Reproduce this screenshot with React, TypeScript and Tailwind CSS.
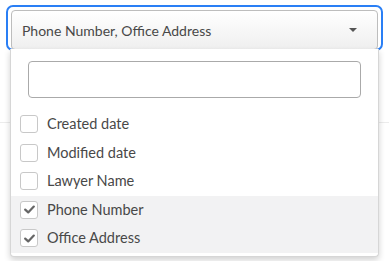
import { useState } from 'react'

const OPTIONS = ['Created date', 'Modified date', 'Lawyer Name', 'Phone Number', 'Office Address']

function Check() {
  return (
    <svg width="11" height="9" viewBox="0 0 11 9" className="text-[#666]">
      <path d="M1.2 4.6 L4.2 7.4 L9.8 1.6" fill="none" stroke="currentColor" strokeWidth="2.2" strokeLinecap="round" strokeLinejoin="round" />
    </svg>
  )
}

export default function App() {
  const [selected, setSelected] = useState<string[]>(['Phone Number', 'Office Address'])

  const toggle = (o: string) =>
    setSelected(s => (s.includes(o) ? s.filter(x => x !== o) : [...s, o]))

  return (
    <div className="relative w-[389px] h-[261px] bg-white overflow-hidden font-['Lato',sans-serif] text-[#484848]">
      {/* faint page divider behind the dropdown */}
      <div className="absolute left-0 right-0 top-[122px] h-px bg-[#ececec]" />

      <div className="relative mx-[6px] mt-[5px]">
        {/* focus ring */}
        <div className="rounded-[7px] border-2 border-[#2a7ff5] p-[3px] pb-0 h-[46px]">
          <div className="flex items-center h-[40px] pl-[10px] pr-[20px] border border-[#bdbdbd] rounded-[4px] bg-gradient-to-b from-white to-[#efefef]">
            <span className="flex-1 text-[14px]">{selected.join(', ')}</span>
            <span className="w-0 h-0 border-l-[4px] border-r-[4px] border-t-[4px] border-l-transparent border-r-transparent border-t-[#555]" />
          </div>
        </div>

        {/* dropdown panel */}
        <div className="absolute left-[4px] right-[4px] top-[44px] bg-white border border-[#d6d6d6] border-t-0 rounded-b-[4px] shadow-[0_3px_6px_rgba(0,0,0,0.18)]">
          <div className="px-[17px] pt-[12px] pb-[11px]">
            <div className="h-[37px] border border-[#aaa] rounded-[4px]" />
          </div>
          <ul className="pb-[3px] pt-[1px]">
            {OPTIONS.map(o => {
              const on = selected.includes(o)
              return (
                <li
                  key={o}
                  onClick={() => toggle(o)}
                  className={`flex items-center gap-[9px] h-[28.5px] pl-[9px] cursor-pointer ${on ? 'bg-[#f2f2f3]' : ''}`}
                >
                  <span className="flex items-center justify-center w-[18px] h-[18px] border border-[#c8c8c8] rounded-[3px] bg-white">
                    {on && <Check />}
                  </span>
                  <span className="text-[14.5px]">{o}</span>
                </li>
              )
            })}
          </ul>
        </div>
      </div>
    </div>
  )
}
